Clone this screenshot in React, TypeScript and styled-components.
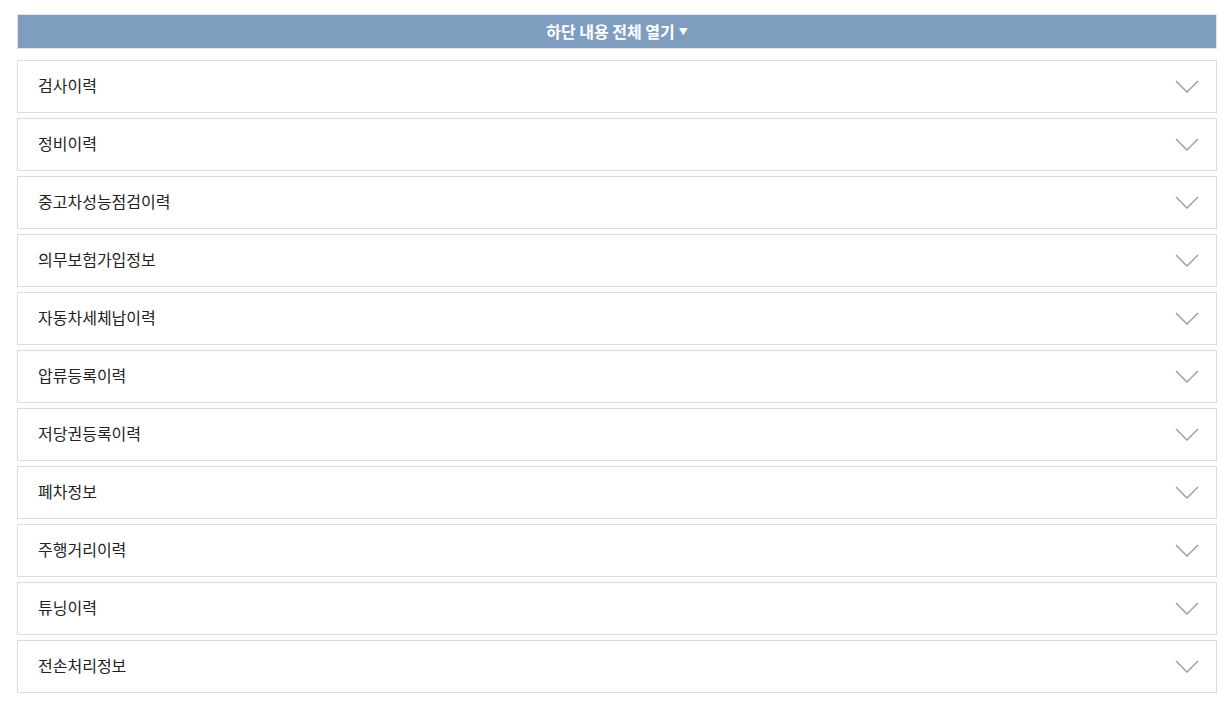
import React from "react";
import styled, { createGlobalStyle } from "styled-components";

const GlobalStyle = createGlobalStyle`
  html, body { margin: 0; padding: 0; background: #fff; }
  body { font-family: "Noto Sans CJK KR", "Noto Sans", sans-serif; }
  * { box-sizing: border-box; }
`;

const Wrapper = styled.div`
  width: 1200px;
  margin: 0 0 0 17px;
  padding-top: 14px;
  display: flex;
  flex-direction: column;
  gap: 5px;
`;

const OpenAllBar = styled.button`
  height: 35px;
  margin-bottom: 6px;
  border: 1px solid #dde3ea;
  background: #7f9dbf;
  color: #fff;
  font-family: inherit;
  font-size: 16px;
  font-weight: 700;
  display: flex;
  align-items: center;
  justify-content: center;
  gap: 4px;
  cursor: pointer;
  padding: 0 0 2px 0;
`;

const Caret = styled.span`
  font-size: 9px;
  line-height: 1;
  margin-top: 2px;
`;

const Row = styled.div`
  height: 53px;
  border: 1px solid #dcdcdc;
  background: #fff;
  display: flex;
  align-items: center;
  justify-content: space-between;
  padding: 0 17px 0 20px;
`;

const Title = styled.span`
  font-size: 16px;
  color: #222;
  margin-bottom: 4px;
`;

const Chevron = () => (
  <svg width="24" height="13" viewBox="0 0 24 13" fill="none">
    <path d="M1 1 L12 12 L23 1" stroke="#9a9a9a" strokeWidth="1.4" />
  </svg>
);

const items = [
  "검사이력",
  "정비이력",
  "중고차성능점검이력",
  "의무보험가입정보",
  "자동차세체납이력",
  "압류등록이력",
  "저당권등록이력",
  "폐차정보",
  "주행거리이력",
  "튜닝이력",
  "전손처리정보",
];

export default function App() {
  return (
    <>
      <GlobalStyle />
      <Wrapper>
        <OpenAllBar>
          하단 내용 전체 열기<Caret>▼</Caret>
        </OpenAllBar>
        {items.map((t) => (
          <Row key={t}>
            <Title>{t}</Title>
            <Chevron />
          </Row>
        ))}
      </Wrapper>
    </>
  );
}
